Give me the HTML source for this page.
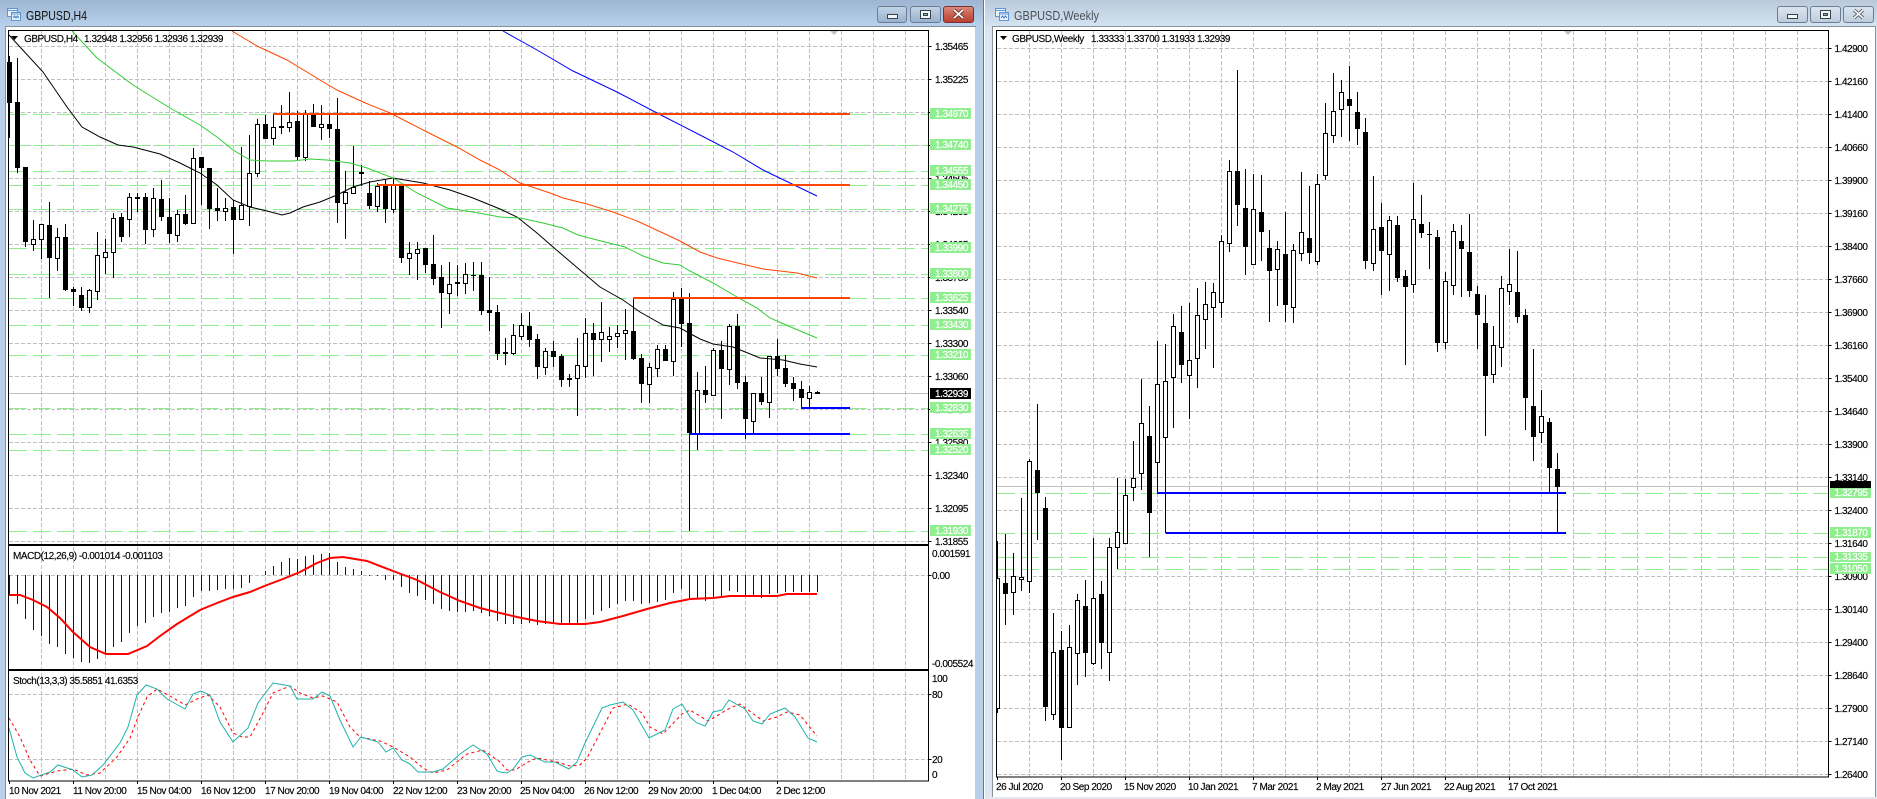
<!DOCTYPE html>
<html><head><meta charset="utf-8"><title>GBPUSD</title>
<style>
html,body{margin:0;padding:0;background:#fff;width:1877px;height:799px;overflow:hidden}
svg{display:block}
text{font-family:"Liberation Sans",sans-serif;font-size:10px;letter-spacing:-.45px;fill:#000;stroke:#000;stroke-width:.15px}
.w{fill:#fff;stroke:#fff;stroke-width:.2px}
.ttl{font-size:12.5px;letter-spacing:0;stroke:none}
.g{stroke:#c0c0c0;stroke-dasharray:4 2;fill:none;stroke-width:1;shape-rendering:crispEdges}
.gl{stroke:#90ee90;stroke-dasharray:18 6;fill:none;stroke-width:1;shape-rendering:crispEdges}
.c{shape-rendering:crispEdges}
.l{fill:none;stroke-width:1}
</style></head><body>
<svg width="1877" height="799" viewBox="0 0 1877 799" xmlns="http://www.w3.org/2000/svg">
<defs>
<linearGradient id="a1" x1="0" y1="0" x2="0" y2="1"><stop offset="0" stop-color="#9db5d1"/><stop offset="1" stop-color="#b9d2ec"/></linearGradient>
<linearGradient id="a2" x1="0" y1="0" x2="0" y2="1"><stop offset="0" stop-color="#b9c9da"/><stop offset="1" stop-color="#d6e4f2"/></linearGradient>
<linearGradient id="b1" x1="0" y1="0" x2="0" y2="1"><stop offset="0" stop-color="#c3d4e6"/><stop offset=".5" stop-color="#aec3da"/><stop offset="1" stop-color="#98b1cd"/></linearGradient>
<linearGradient id="b2" x1="0" y1="0" x2="0" y2="1"><stop offset="0" stop-color="#dce6f0"/><stop offset=".5" stop-color="#ccd9e6"/><stop offset="1" stop-color="#bccbdc"/></linearGradient>
<linearGradient id="cl" x1="0" y1="0" x2="0" y2="1"><stop offset="0" stop-color="#dc8b7c"/><stop offset=".5" stop-color="#c9604f"/><stop offset="1" stop-color="#b8402f"/></linearGradient>
</defs>
<!-- window frames -->
<rect width="1877" height="799" fill="#fff"/>
<rect x="0" y="0" width="983" height="799" fill="#b8d0ea"/>
<rect x="0" y="0" width="983" height="27" fill="url(#a1)"/>
<rect x="6" y="27" width="969" height="772" fill="#fff"/>
<path d="M5.5 27V799M5 26.500H976" stroke="#858f99" stroke-width="1" fill="none" class="c"/>
<rect x="983" y="0" width="1" height="799" fill="#5f7a94"/>
<rect x="985" y="0" width="892" height="799" fill="#dbe6f2"/>
<rect x="985" y="0" width="892" height="27" fill="url(#a2)"/>
<rect x="993" y="27" width="882" height="770" fill="#fff"/>
<path d="M992.5 27V797M992 26.500H1875.5V797" stroke="#8b949c" stroke-width="1" fill="none" class="c"/>
<rect x="985" y="797" width="892" height="2" fill="#e4e8ec"/>

<!-- title: icons -->
<g fill="#eaf2fb" stroke="#5f95d6" stroke-width="1" class="c">
<rect x="7.500" y="8.500" width="10" height="8"/><rect x="11.500" y="12.500" width="9" height="8"/>
<rect x="995.500" y="8.500" width="10" height="8"/><rect x="999.500" y="12.500" width="9" height="8"/>
</g>
<path d="M8 10.500H17M12 14H20M1 0" stroke="#5f95d6" fill="none"/>
<path d="M996 10.500H1005M1000 14H1008" stroke="#5f95d6" fill="none"/>
<path d="M13 18l1.500-2 1.500 2 1.500-2 1.500 2M1001 18l1.500-2 1.500 2 1.500-2 1.500 2" stroke="#3f78c0" fill="none"/>
<text class="ttl" x="26" y="20" textLength="61" lengthAdjust="spacingAndGlyphs" style="fill:#111">GBPUSD,H4</text>
<text class="ttl" x="1014" y="20" textLength="85" lengthAdjust="spacingAndGlyphs" style="fill:#4a5058">GBPUSD,Weekly</text>

<!-- buttons -->
<g stroke="#6b7d95" stroke-width="1">
<rect x="877.5" y="6.5" width="29" height="16" rx="2.5" fill="url(#b1)"/>
<rect x="910.5" y="6.5" width="30" height="16" rx="2.5" fill="url(#b1)"/>
<rect x="943.5" y="6.5" width="30" height="16" rx="2.5" fill="url(#cl)" stroke="#7b3030"/>
<rect x="1777.5" y="6.5" width="30" height="16" rx="2.5" fill="url(#b2)"/>
<rect x="1810.5" y="6.5" width="30" height="16" rx="2.5" fill="url(#b2)"/>
<rect x="1843.5" y="6.5" width="30" height="16" rx="2.5" fill="url(#b2)"/>
</g>
<g stroke="#39414c" stroke-width="1" fill="#f2f5f8" class="c">
<rect x="887.5" y="14.5" width="10" height="4"/>
<rect x="920.5" y="10.5" width="10" height="8"/><rect x="923.5" y="13.5" width="4" height="2" fill="#8aa"/>
<rect x="1787.5" y="14.5" width="10" height="4"/>
<rect x="1820.5" y="10.5" width="10" height="8"/><rect x="1823.5" y="13.5" width="4" height="2" fill="#8aa"/>
</g>
<path d="M954 10l9 8M963 10l-9 8" stroke="#5c2a25" stroke-width="3.4"/><path d="M954 10l9 8M963 10l-9 8" stroke="#fff" stroke-width="1.8"/>
<path d="M1854 10l9 8M1863 10l-9 8" stroke="#4c5563" stroke-width="3.4"/><path d="M1854 10l9 8M1863 10l-9 8" stroke="#f4f6f8" stroke-width="1.8"/>

<!-- LEFT CHART grid -->
<path class="g" d="M41.5 31V781M73.5 31V781M105.5 31V781M137.5 31V781M169.5 31V781M201.5 31V781M233.5 31V781M265.5 31V781M297.5 31V781M329.5 31V781M361.5 31V781M393.5 31V781M425.5 31V781M457.5 31V781M489.5 31V781M521.5 31V781M553.5 31V781M585.5 31V781M617.5 31V781M649.5 31V781M681.5 31V781M713.5 31V781M745.5 31V781M777.5 31V781M809.5 31V781M841.5 31V781M873.5 31V781M905.5 31V781"/>
<path class="g" d="M9 46.5H928M9 79.5H928M9 112.5H928M9 145.5H928M9 178.5H928M9 211.5H928M9 244.5H928M9 277.5H928M9 310.5H928M9 343.5H928M9 376.5H928M9 409.5H928M9 442.5H928M9 475.5H928M9 508.5H928M9 541.5H928M9 575.5H928M9 694.5H928M9 759.5H928"/>
<path d="M9 393.5H928" stroke="#c0c0c0" class="c"/>
<path class="gl" d="M9 114.5H928M9 145.5H928M9 171.5H928M9 185.5H928M9 209.5H928M9 248.5H928M9 274.5H928M9 298.5H928M9 325.5H928M9 355.5H928M9 408.5H928M9 434.5H928M9 450.5H928M9 531.5H928"/>

<!-- left candles -->
<path class="c" stroke="#000" fill="none" d="M9.5 56V138M17.5 58V173M25.5 167V247M33.5 220V251M41.5 224V259M49.5 202V298M57.5 228V271M65.5 224V291M73.5 287V306M81.5 287V311M89.5 289V313M97.5 232V300M105.5 239V274M113.5 213V278M121.5 213V242M129.5 193V237M137.5 193V212M145.5 193V244M153.5 188V237M161.5 180V221M169.5 198V243M177.5 210V242M185.5 195V225M193.5 148V224M201.5 157V205M209.5 168V229M217.5 188V221M225.5 198V221M233.5 200V254M241.5 147V220M249.5 135V226M257.5 119V177M265.5 115V139M273.5 114V145M281.5 105V134M289.5 92V132M297.5 111V160M305.5 110V161M313.5 104V127M321.5 105V140M329.5 114V138M337.5 98V223M345.5 171V239M353.5 146V193M361.5 165V186M369.5 181V209M377.5 183V212M385.5 180V223M393.5 178V213M401.5 185V263M409.5 242V275M417.5 242V280M425.5 248V273M433.5 235V285M441.5 265V328M449.5 262V314M457.5 265V296M465.5 263V294M473.5 262V291M481.5 262V315M489.5 277V331M497.5 305V360M505.5 338V365M513.5 324V355M521.5 313V340M529.5 312V347M537.5 334V379M545.5 348V375M553.5 341V367M561.5 354V387M569.5 374V387M577.5 338V416M585.5 318V378M593.5 323V376M601.5 302V362M609.5 327V352M617.5 325V348M625.5 309V360M633.5 298V360M641.5 354V403M649.5 363V403M657.5 345V377M665.5 345V361M673.5 292V376M681.5 288V347M689.5 293V531M697.5 372V450M705.5 366V403M713.5 348V395M721.5 341V419M729.5 324V385M737.5 314V389M745.5 376V439M753.5 393V433M761.5 377V405M769.5 356V418M777.5 339V376M785.5 355V387M793.5 377V401M801.5 381V408M809.5 386V407M817.5 391V394"/>
<path class="c" fill="#000" d="M7 62h5V103h-5zM15 102h5V168h-5zM23 167h5V242h-5zM47 225h5V258h-5zM63 237h5V290h-5zM71 289h5V292h-5zM79 295h5V308h-5zM119 217h5V237h-5zM135 197h5V199h-5zM143 197h5V230h-5zM159 199h5V217h-5zM167 217h5V234h-5zM183 214h5V224h-5zM199 157h5V168h-5zM207 168h5V209h-5zM215 208h5V211h-5zM231 207h5V220h-5zM263 124h5V139h-5zM279 126h5V128h-5zM295 121h5V157h-5zM311 114h5V127h-5zM327 124h5V129h-5zM335 129h5V203h-5zM359 172h5V174h-5zM367 193h5V206h-5zM383 185h5V209h-5zM399 186h5V258h-5zM423 248h5V265h-5zM431 264h5V279h-5zM439 277h5V293h-5zM455 282h5V284h-5zM471 275h5V276h-5zM479 275h5V311h-5zM487 310h5V313h-5zM495 312h5V354h-5zM503 352h5V354h-5zM527 326h5V340h-5zM535 339h5V367h-5zM551 351h5V357h-5zM559 356h5V380h-5zM567 378h5V380h-5zM591 333h5V340h-5zM631 331h5V359h-5zM639 358h5V384h-5zM663 349h5V361h-5zM679 299h5V324h-5zM687 323h5V433h-5zM703 390h5V395h-5zM719 350h5V369h-5zM735 326h5V383h-5zM743 382h5V419h-5zM759 393h5V402h-5zM775 356h5V369h-5zM783 368h5V384h-5zM791 383h5V389h-5zM799 389h5V398h-5zM815 392h5V394h-5z"/>
<path class="c" fill="#fff" stroke="#000" d="M31.5 239.5h4V244.5h-4zM39.5 224.5h4V239.5h-4zM55.5 237.5h4V258.5h-4zM87.5 290.5h4V307.5h-4zM95.5 255.5h4V291.5h-4zM103.5 252.5h4V257.5h-4zM111.5 218.5h4V252.5h-4zM127.5 197.5h4V219.5h-4zM151.5 198.5h4V229.5h-4zM175.5 214.5h4V235.5h-4zM191.5 158.5h4V223.5h-4zM223.5 208.5h4V211.5h-4zM239.5 205.5h4V219.5h-4zM247.5 173.5h4V206.5h-4zM255.5 124.5h4V173.5h-4zM271.5 127.5h4V138.5h-4zM287.5 122.5h4V127.5h-4zM303.5 114.5h4V157.5h-4zM319.5 124.5h4V127.5h-4zM343.5 192.5h4V203.5h-4zM351.5 187.5h4V193.5h-4zM375.5 186.5h4V206.5h-4zM391.5 184.5h4V209.5h-4zM407.5 253.5h4V258.5h-4zM415.5 249.5h4V253.5h-4zM447.5 284.5h4V293.5h-4zM463.5 274.5h4V283.5h-4zM511.5 335.5h4V353.5h-4zM519.5 325.5h4V336.5h-4zM543.5 351.5h4V367.5h-4zM575.5 365.5h4V378.5h-4zM583.5 333.5h4V366.5h-4zM599.5 332.5h4V339.5h-4zM607.5 336.5h4V339.5h-4zM615.5 333.5h4V336.5h-4zM623.5 330.5h4V333.5h-4zM647.5 367.5h4V384.5h-4zM655.5 349.5h4V368.5h-4zM671.5 299.5h4V361.5h-4zM695.5 390.5h4V433.5h-4zM711.5 350.5h4V395.5h-4zM727.5 326.5h4V369.5h-4zM751.5 393.5h4V421.5h-4zM767.5 356.5h4V402.5h-4zM807.5 392.5h4V398.5h-4z"/>

<!-- moving averages -->
<polyline class="l" stroke="#000" points="9,35 43,72 67,107 82,127 100,137 118,145 133,147 160,154 180,163 200,173 217,185 233,200 250,207 267,211 282,215 290,213 303,207 320,202 337,195 353,187 370,182 393,178 423,183 450,190 473,198 500,209 517,217 537,233 553,247 580,270 600,287 623,300 640,312 663,325 680,328 700,339 713,344 733,347 760,358 783,360 800,364 817,367"/>
<polyline class="l" stroke="#32cd32" points="72,31 97,58 133,85 170,108 200,125 217,137 233,150 250,160 267,161 293,161 310,159 327,160 350,163 367,168 393,178 417,193 447,208 473,212 500,217 520,218 543,223 563,228 578,235 597,240 625,247 643,256 663,263 680,265 688,270 713,283 737,297 757,308 770,318 793,328 817,338"/>
<polyline class="l" stroke="#ff4500" points="232,31 257,46 287,60 320,80 337,90 363,102 390,113 427,132 457,147 480,160 500,170 520,183 550,193 563,198 587,204 613,212 637,221 663,233 680,241 700,252 717,258 763,269 797,273 817,278"/>
<polyline class="l" stroke="#0000ff" points="503,31 537,50 573,71 617,92 657,113 700,135 733,152 763,170 790,183 817,196"/>

<!-- left hlines -->
<path class="c" fill="none" stroke="#ff4500" stroke-width="2" d="M273 114H850M377 185H850M633 298H850"/>
<path class="c" fill="none" stroke="#0000ff" stroke-width="2" d="M801 408H850M689 434H850"/>

<!-- MACD -->
<path class="c" stroke="#0000e0" fill="none" d="M9.5 575V595M17.5 575V604M25.5 575V619M33.5 575V630M41.5 575V636M49.5 575V644M57.5 575V647M65.5 575V654M73.5 575V658M81.5 575V662M89.5 575V663M97.5 575V659M105.5 575V654M113.5 575V647M121.5 575V642M129.5 575V633M137.5 575V626M145.5 575V623M153.5 575V617M161.5 575V613M169.5 575V612M177.5 575V608M185.5 575V606M193.5 575V597M201.5 575V591M209.5 575V591M217.5 575V590M225.5 575V589M233.5 575V589M241.5 575V588M249.5 575V583M265.5 575V571M273.5 575V566M281.5 575V562M289.5 575V558M297.5 575V559M305.5 575V556M313.5 575V555M321.5 575V554M329.5 575V553M337.5 575V562M345.5 575V567M353.5 575V569M361.5 575V571M369.5 575V576M377.5 575V576M385.5 575V580M393.5 575V580M401.5 575V587M409.5 575V593M417.5 575V596M425.5 575V600M433.5 575V604M441.5 575V609M449.5 575V611M457.5 575V612M465.5 575V612M473.5 575V611M481.5 575V613M489.5 575V616M497.5 575V621M505.5 575V624M513.5 575V624M521.5 575V624M529.5 575V623M537.5 575V625M545.5 575V624M553.5 575V623M561.5 575V623M569.5 575V623M577.5 575V623M585.5 575V619M593.5 575V615M601.5 575V611M609.5 575V608M617.5 575V604M625.5 575V601M633.5 575V601M641.5 575V604M649.5 575V603M657.5 575V602M665.5 575V600M673.5 575V593M681.5 575V589M689.5 575V598M697.5 575V599M705.5 575V601M713.5 575V598M721.5 575V598M729.5 575V591M737.5 575V592M745.5 575V596M753.5 575V595M761.5 575V598M769.5 575V594M777.5 575V593M785.5 575V592M793.5 575V592M801.5 575V592M809.5 575V592M817.5 575V592"/>
<polyline fill="none" stroke="#ff0000" stroke-width="2" points="9,595 20,595 33,600 47,607 60,618 73,632 90,647 106,654 128,654 147,646 160,636 177,624 200,610 217,603 233,597 250,592 267,585 283,579 300,572 317,563 330,558 343,557 367,561 393,571 417,580 440,592 460,601 480,608 500,613 517,617 537,621 560,624 585,624 600,622 623,616 647,609 670,603 690,599 713,598 730,596 777,596 787,594 817,594"/>

<!-- Stoch -->
<polyline class="l" stroke="#ff0000" stroke-dasharray="3 3" points="9,718 20,737 30,760 40,776 57,771 73,769 87,775 100,773 117,757 130,738 138,717 147,697 157,689 170,696 185,705 197,699 208,695 220,707 233,733 242,737 250,737 263,713 273,693 290,686 300,693 313,698 323,696 337,702 350,727 360,737 380,741 393,747 410,757 423,768 433,773 447,770 467,754 483,750 500,762 507,770 515,770 528,762 537,758 557,762 570,766 580,765 587,758 600,733 613,708 628,704 642,713 650,727 663,734 682,714 690,710 708,721 730,708 740,704 763,721 777,717 787,712 800,715 817,736"/>
<polyline class="l" stroke="#20b2aa" points="9,728 17,757 25,773 33,778 50,772 58,765 73,770 82,777 92,775 103,765 120,743 128,727 137,695 146,685 157,689 167,699 185,709 193,694 201,691 210,695 220,722 233,742 248,728 258,703 273,683 290,686 297,699 313,699 322,692 330,696 340,720 353,747 361,737 378,742 386,752 393,748 402,760 410,764 418,772 433,772 443,769 460,754 473,745 487,754 497,771 500,772 507,773 513,769 522,757 530,755 545,762 555,762 569,769 577,762 585,743 602,708 610,705 623,702 633,710 649,738 665,730 673,709 682,704 690,717 697,723 705,726 713,712 722,710 729,700 745,709 753,721 762,724 770,714 785,708 795,717 808,738 817,742"/>

<!-- left frames -->
<path class="c" stroke="#000" fill="none" d="M8.5 30.5H928.5V781H8.5ZM928.5 46.5h3M928.5 79.5h3M928.5 112.5h3M928.5 145.5h3M928.5 178.5h3M928.5 211.5h3M928.5 244.5h3M928.5 277.5h3M928.5 310.5h3M928.5 343.5h3M928.5 376.5h3M928.5 409.5h3M928.5 442.5h3M928.5 475.5h3M928.5 508.5h3M928.5 541.5h3M928.5 575.5h3M928.5 694.5h3M928.5 759.5h3M9.5 781v3M73.5 781v3M137.5 781v3M201.5 781v3M265.5 781v3M329.5 781v3M393.5 781v3M457.5 781v3M521.5 781v3M585.5 781v3M649.5 781v3M713.5 781v3M777.5 781v3"/>
<path class="c" stroke="#000" stroke-width="2" fill="none" d="M8 545H929M8 670H929"/>
<path d="M11 36h7l-3.500 4z" fill="#000"/>
<path d="M830 31h8l-4 4z" fill="#c0c0c0"/>
<text x="24" y="42">GBPUSD,H4</text>
<text x="84" y="42">1.32948 1.32956 1.32936 1.32939</text>
<text x="13" y="559">MACD(12,26,9) -0.001014 -0.001103</text>
<text x="13" y="684">Stoch(13,3,3) 35.5851 41.6353</text>

<!-- left axis labels -->
<text x="935" y="50">1.35465</text><text x="935" y="83">1.35225</text><text x="935" y="116">1.34985</text><text x="935" y="149">1.34745</text><text x="935" y="182">1.34505</text><text x="935" y="215">1.34265</text><text x="935" y="248">1.34025</text><text x="935" y="281">1.33780</text><text x="935" y="314">1.33540</text><text x="935" y="347">1.33300</text><text x="935" y="380">1.33060</text><text x="935" y="413">1.32820</text><text x="935" y="446">1.32580</text><text x="935" y="479">1.32340</text><text x="935" y="512">1.32095</text><text x="935" y="545">1.31855</text>
<text x="932" y="557">0.001591</text><text x="932" y="579">0.00</text><text x="932" y="667">-0.005524</text>
<text x="932" y="682">100</text><text x="932" y="698">80</text><text x="932" y="763">20</text><text x="932" y="778">0</text>
<g fill="#90ee90" class="c">
<rect x="930" y="108" width="41" height="11"/><rect x="930" y="139" width="41" height="11"/><rect x="930" y="165" width="41" height="11"/><rect x="930" y="179" width="41" height="11"/><rect x="930" y="203" width="41" height="11"/><rect x="930" y="242" width="41" height="11"/><rect x="930" y="268" width="41" height="11"/><rect x="930" y="292" width="41" height="11"/><rect x="930" y="319" width="41" height="11"/><rect x="930" y="349" width="41" height="11"/><rect x="930" y="402" width="41" height="11"/><rect x="930" y="428" width="41" height="11"/><rect x="930" y="444" width="41" height="11"/><rect x="930" y="525" width="41" height="11"/>
</g>
<rect x="930" y="388" width="41" height="11" fill="#000"/>
<text class="w" x="935" y="117">1.34970</text><text class="w" x="935" y="148">1.34740</text><text class="w" x="935" y="174">1.34555</text><text class="w" x="935" y="188">1.34450</text><text class="w" x="935" y="212">1.34275</text><text class="w" x="935" y="251">1.33990</text><text class="w" x="935" y="277">1.33800</text><text class="w" x="935" y="301">1.33625</text><text class="w" x="935" y="328">1.33430</text><text class="w" x="935" y="358">1.33210</text><text class="w" x="935" y="397">1.32939</text><text class="w" x="935" y="411">1.32830</text><text class="w" x="935" y="437">1.32635</text><text class="w" x="935" y="453">1.32520</text><text class="w" x="935" y="534">1.31930</text>
<!-- left time labels -->
<text x="9" y="794">10 Nov 2021</text><text x="73" y="794">11 Nov 20:00</text><text x="137" y="794">15 Nov 04:00</text><text x="201" y="794">16 Nov 12:00</text><text x="265" y="794">17 Nov 20:00</text><text x="329" y="794">19 Nov 04:00</text><text x="393" y="794">22 Nov 12:00</text><text x="457" y="794">23 Nov 20:00</text><text x="520" y="794">25 Nov 04:00</text><text x="584" y="794">26 Nov 12:00</text><text x="648" y="794">29 Nov 20:00</text><text x="712" y="794">1 Dec 04:00</text><text x="776" y="794">2 Dec 12:00</text>

<!-- RIGHT CHART grid -->
<path class="g" d="M1029.5 31V777M1061.5 31V777M1093.5 31V777M1125.5 31V777M1157.5 31V777M1189.5 31V777M1221.5 31V777M1253.5 31V777M1285.5 31V777M1317.5 31V777M1349.5 31V777M1381.5 31V777M1413.5 31V777M1445.5 31V777M1477.5 31V777M1509.5 31V777M1541.5 31V777M1573.5 31V777M1605.5 31V777M1637.5 31V777M1669.5 31V777M1701.5 31V777M1733.5 31V777M1765.5 31V777M1797.5 31V777"/>
<path class="g" d="M997 48.5H1828M997 81.5H1828M997 114.5H1828M997 147.5H1828M997 180.5H1828M997 213.5H1828M997 246.5H1828M997 279.5H1828M997 312.5H1828M997 345.5H1828M997 378.5H1828M997 411.5H1828M997 444.5H1828M997 477.5H1828M997 510.5H1828M997 543.5H1828M997 576.5H1828M997 609.5H1828M997 642.5H1828M997 675.5H1828M997 708.5H1828M997 741.5H1828M997 774.5H1828"/>
<path d="M997 486.5H1828" stroke="#c0c0c0" class="c"/>
<path class="gl" d="M997 493.5H1828M997 533.5H1828M997 557.5H1828M997 569.5H1828"/>
<!-- right candles -->
<path class="c" stroke="#000" fill="none" d="M997.5 541V713M1005.5 534V625M1013.5 553V615M1021.5 498V591M1029.5 459V593M1037.5 404V540M1045.5 497V721M1053.5 613V720M1061.5 631V760M1069.5 625V727M1077.5 594V685M1085.5 580V677M1093.5 538V665M1101.5 581V669M1109.5 538V681M1117.5 478V569M1125.5 479V543M1133.5 441V501M1141.5 379V490M1149.5 406V557M1157.5 341V493M1165.5 344V533M1173.5 314V428M1181.5 306V383M1189.5 303V419M1197.5 288V388M1205.5 282V349M1213.5 283V368M1221.5 235V318M1229.5 160V252M1237.5 70V226M1245.5 169V275M1253.5 174V264M1261.5 175V261M1269.5 230V322M1277.5 241V306M1285.5 212V322M1293.5 244V323M1301.5 172V261M1309.5 186V264M1317.5 174V265M1325.5 103V180M1333.5 73V143M1341.5 80V137M1349.5 66V141M1357.5 92V145M1365.5 118V269M1373.5 176V271M1381.5 203V295M1389.5 216V291M1397.5 216V282M1405.5 270V365M1413.5 183V293M1421.5 195V238M1429.5 222V269M1437.5 230V352M1445.5 272V349M1453.5 224V295M1461.5 225V297M1469.5 214V297M1477.5 286V349M1485.5 295V436M1493.5 326V383M1501.5 276V367M1509.5 249V305M1517.5 251V323M1525.5 309V430M1533.5 349V461M1541.5 390V443M1549.5 418V493M1557.5 453V533"/>
<path class="c" fill="#000" d="M1003 583h5V594h-5zM1035 470h5V493h-5zM1043 508h5V707h-5zM1059 650h5V728h-5zM1083 606h5V653h-5zM1099 594h5V643h-5zM1147 436h5V513h-5zM1179 332h5V365h-5zM1235 171h5V205h-5zM1243 208h5V247h-5zM1259 212h5V232h-5zM1267 248h5V271h-5zM1283 254h5V305h-5zM1307 238h5V253h-5zM1347 99h5V106h-5zM1355 112h5V129h-5zM1363 132h5V261h-5zM1379 227h5V251h-5zM1395 225h5V278h-5zM1403 276h5V287h-5zM1419 224h5V233h-5zM1427 234h5V235h-5zM1435 237h5V343h-5zM1459 241h5V249h-5zM1467 252h5V291h-5zM1475 294h5V315h-5zM1483 323h5V376h-5zM1515 292h5V317h-5zM1523 315h5V398h-5zM1531 406h5V437h-5zM1547 422h5V468h-5zM1555 469h5V487h-5z"/>
<path class="c" fill="#fff" stroke="#000" d="M996.5 578.5h3V708.5h-3zM1011.5 576.5h4V592.5h-4zM1019.5 577.5h4V579.5h-4zM1027.5 461.5h4V581.5h-4zM1051.5 652.5h4V714.5h-4zM1067.5 647.5h4V727.5h-4zM1075.5 600.5h4V653.5h-4zM1091.5 598.5h4V663.5h-4zM1107.5 547.5h4V652.5h-4zM1115.5 532.5h4V547.5h-4zM1123.5 495.5h4V543.5h-4zM1131.5 478.5h4V487.5h-4zM1139.5 423.5h4V473.5h-4zM1155.5 384.5h4V462.5h-4zM1163.5 381.5h4V437.5h-4zM1171.5 326.5h4V377.5h-4zM1187.5 360.5h4V375.5h-4zM1195.5 315.5h4V358.5h-4zM1203.5 304.5h4V319.5h-4zM1211.5 292.5h4V307.5h-4zM1219.5 241.5h4V302.5h-4zM1227.5 171.5h4V243.5h-4zM1251.5 209.5h4V264.5h-4zM1275.5 249.5h4V269.5h-4zM1291.5 250.5h4V307.5h-4zM1299.5 232.5h4V253.5h-4zM1315.5 184.5h4V261.5h-4zM1323.5 133.5h4V175.5h-4zM1331.5 111.5h4V135.5h-4zM1339.5 92.5h4V109.5h-4zM1371.5 229.5h4V263.5h-4zM1387.5 220.5h4V254.5h-4zM1411.5 219.5h4V284.5h-4zM1443.5 281.5h4V342.5h-4zM1451.5 231.5h4V285.5h-4zM1491.5 345.5h4V374.5h-4zM1499.5 288.5h4V347.5h-4zM1507.5 284.5h4V291.5h-4zM1539.5 416.5h4V432.5h-4z"/>
<path class="c" fill="none" stroke="#0000ff" stroke-width="2" d="M1157 493H1566M1166 533H1566"/>
<path class="c" stroke="#000" fill="none" d="M996.5 30.5H1828.5V777H996.5ZM1828.5 48.5h3M1828.5 81.5h3M1828.5 114.5h3M1828.5 147.5h3M1828.5 180.5h3M1828.5 213.5h3M1828.5 246.5h3M1828.5 279.5h3M1828.5 312.5h3M1828.5 345.5h3M1828.5 378.5h3M1828.5 411.5h3M1828.5 444.5h3M1828.5 477.5h3M1828.5 510.5h3M1828.5 543.5h3M1828.5 576.5h3M1828.5 609.5h3M1828.5 642.5h3M1828.5 675.5h3M1828.5 708.5h3M1828.5 741.5h3M1828.5 774.5h3M997.5 777v3M1061.5 777v3M1125.5 777v3M1189.5 777v3M1253.5 777v3M1317.5 777v3M1381.5 777v3M1445.5 777v3M1509.5 777v3"/>
<path d="M1000 36h7l-3.500 4z" fill="#000"/>
<path d="M1564 31h8l-4 4z" fill="#c0c0c0"/>
<text x="1012" y="42">GBPUSD,Weekly</text>
<text x="1091" y="42">1.33333 1.33700 1.31933 1.32939</text>
<!-- right axis -->
<rect x="1830" y="481" width="41" height="7" fill="#000"/>
<text x="1834.500" y="52">1.42900</text><text x="1834.500" y="85">1.42160</text><text x="1834.500" y="118">1.41400</text><text x="1834.500" y="151">1.40660</text><text x="1834.500" y="184">1.39900</text><text x="1834.500" y="217">1.39160</text><text x="1834.500" y="250">1.38400</text><text x="1834.500" y="283">1.37660</text><text x="1834.500" y="316">1.36900</text><text x="1834.500" y="349">1.36160</text><text x="1834.500" y="382">1.35400</text><text x="1834.500" y="415">1.34640</text><text x="1834.500" y="448">1.33900</text><text x="1834.500" y="481">1.33140</text><text x="1834.500" y="514">1.32400</text><text x="1834.500" y="547">1.31640</text><text x="1834.500" y="580">1.30900</text><text x="1834.500" y="613">1.30140</text><text x="1834.500" y="646">1.29400</text><text x="1834.500" y="679">1.28640</text><text x="1834.500" y="712">1.27900</text><text x="1834.500" y="745">1.27140</text><text x="1834.500" y="778">1.26400</text>
<g fill="#90ee90" class="c"><rect x="1830" y="488" width="41" height="10"/><rect x="1830" y="527" width="41" height="11"/><rect x="1830" y="552" width="41" height="10"/><rect x="1830" y="563" width="41" height="11"/></g>
<text class="w" x="1834.500" y="496">1.32795</text><text class="w" x="1834.500" y="536">1.31870</text><text class="w" x="1834.500" y="560">1.31335</text><text class="w" x="1834.500" y="572">1.31050</text>
<!-- right time labels -->
<text x="996" y="790">26 Jul 2020</text><text x="1060" y="790">20 Sep 2020</text><text x="1124" y="790">15 Nov 2020</text><text x="1188" y="790">10 Jan 2021</text><text x="1252" y="790">7 Mar 2021</text><text x="1316" y="790">2 May 2021</text><text x="1381" y="790">27 Jun 2021</text><text x="1444" y="790">22 Aug 2021</text><text x="1508" y="790">17 Oct 2021</text>
</svg>
</body></html>
